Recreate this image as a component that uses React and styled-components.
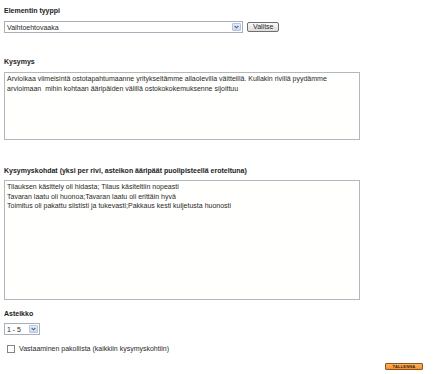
import React from 'react';
import styled, { createGlobalStyle } from 'styled-components';

const GlobalStyle = createGlobalStyle`
  html, body {
    margin: 0;
    padding: 0;
    background: #ffffff;
    font-family: "Liberation Sans", Arial, sans-serif;
    color: #222;
  }
`;

const Page = styled.div`
  width: 435px;
  height: 374px;
  box-sizing: border-box;
  padding: 6px 0 0 4px;
  display: flex;
  flex-direction: column;
`;

const Label = styled.div`
  font-size: 7px;
  font-weight: bold;
  line-height: 9px;
  height: 9px;
  margin-top: ${p => p.$top || 0}px;
  margin-bottom: ${p => p.$bottom || 5}px;
  color: #1c1c1c;
`;

const Row = styled.div`
  display: flex;
  align-items: center;
  gap: 4px;
`;

const SelectBox = styled.div`
  width: ${p => p.$width}px;
  height: 12px;
  box-sizing: border-box;
  border: 1px solid #a9b0ba;
  background: #fff;
  display: flex;
  align-items: center;
  font-size: 7px;
  color: #2a2a2a;
`;

const SelectValue = styled.span`
  flex: 1;
  padding-left: 2px;
  white-space: nowrap;
  overflow: hidden;
`;

const ArrowBox = styled.span`
  width: 9px;
  height: 8px;
  margin-right: 1px;
  box-sizing: border-box;
  border: 1px solid #b4c6e4;
  border-radius: 1px;
  background: linear-gradient(#e6eefa, #c9d8f0);
  display: flex;
  align-items: center;
  justify-content: center;
`;

const Button = styled.button`
  width: 32px;
  height: 10px;
  padding: 0 5px;
  box-sizing: border-box;
  border: 1px solid #6f6f6f;
  border-radius: 2px;
  background: linear-gradient(#fafafa, #dcdcdc);
  font-family: inherit;
  font-size: 7px;
  line-height: 8px;
  color: #2a2a2a;
`;

const TextArea = styled.textarea`
  display: block;
  width: 356px;
  height: ${p => p.$height}px;
  box-sizing: border-box;
  margin: 0;
  padding: 1px 2px;
  border: 1px solid #b4b8bd;
  background: #fffffd;
  font-family: "Liberation Sans", Arial, sans-serif;
  font-size: 7px;
  line-height: 9.6px;
  color: #2a2a2a;
  resize: none;
  overflow: hidden;
  outline: none;
`;

const CheckRow = styled.label`
  display: flex;
  align-items: center;
  gap: 4px;
  margin: 9px 0 0 3px;
  font-size: 7px;
  line-height: 9px;
  color: #2a2a2a;
`;

const CheckBox = styled.input`
  appearance: none;
  margin: 0;
  width: 8px;
  height: 8px;
  box-sizing: border-box;
  border: 1px solid #858585;
  background: #fff;
`;

const SaveRow = styled.div`
  display: flex;
  justify-content: flex-end;
  width: 419px;
  margin-top: 10px;
`;

const SaveButton = styled.button`
  width: 38px;
  height: 7px;
  box-sizing: border-box;
  padding: 0;
  border: 1px solid #8a5520;
  border-radius: 1px;
  background: linear-gradient(#ffb060, #f7922e);
  font-family: inherit;
  font-size: 4px;
  font-weight: bold;
  line-height: 5px;
  color: #3a2410;
  letter-spacing: 0.2px;
`;

const Chevron = () => (
  <svg width="5" height="4" viewBox="0 0 5 4">
    <path d="M0.6 0.8 L2.5 2.8 L4.4 0.8" fill="none" stroke="#4a5f86" strokeWidth="1.1" />
  </svg>
);

const Select = ({ value, width }) => (
  <SelectBox $width={width}>
    <SelectValue>{value}</SelectValue>
    <ArrowBox><Chevron /></ArrowBox>
  </SelectBox>
);

const questionText =
  'Arvioikaa viimeisintä ostotapahtumaanne yritykseltämme allaolevilla väitteillä. Kullakin rivillä pyydämme arvioimaan  mihin kohtaan ääripäiden välillä ostokokokemuksenne sijoittuu';

const itemsText = [
  'Tilauksen käsittely oli hidasta; Tilaus käsiteltiin nopeasti',
  'Tavaran laatu oli huonoa;Tavaran laatu oli erittäin hyvä',
  'Toimitus oli pakattu siististi ja tukevasti;Pakkaus kesti kuljetusta huonosti',
].join('\n');

export default function App() {
  return (
    <>
      <GlobalStyle />
      <Page>
        <Label $bottom={6}>Elementin tyyppi</Label>
        <Row>
          <Select value="Vaihtoehtovaaka" width={239} />
          <Button type="button">Valitse</Button>
        </Row>

        <Label $top={24} $bottom={6}>Kysymys</Label>
        <TextArea $height={68} readOnly defaultValue={questionText} />

        <Label $top={26} $bottom={5}>Kysymyskohdat (yksi per rivi, asteikon ääripäät puolipisteellä eroteltuna)</Label>
        <TextArea $height={120} readOnly defaultValue={itemsText} />

        <Label $top={9} $bottom={5}>Asteikko</Label>
        <Row>
          <Select value="1 - 5" width={36} />
        </Row>

        <CheckRow>
          <CheckBox type="checkbox" />
          Vastaaminen pakollista (kaikkiin kysymyskohtiin)
        </CheckRow>

        <SaveRow>
          <SaveButton type="button">TALLENNA</SaveButton>
        </SaveRow>
      </Page>
    </>
  );
}
